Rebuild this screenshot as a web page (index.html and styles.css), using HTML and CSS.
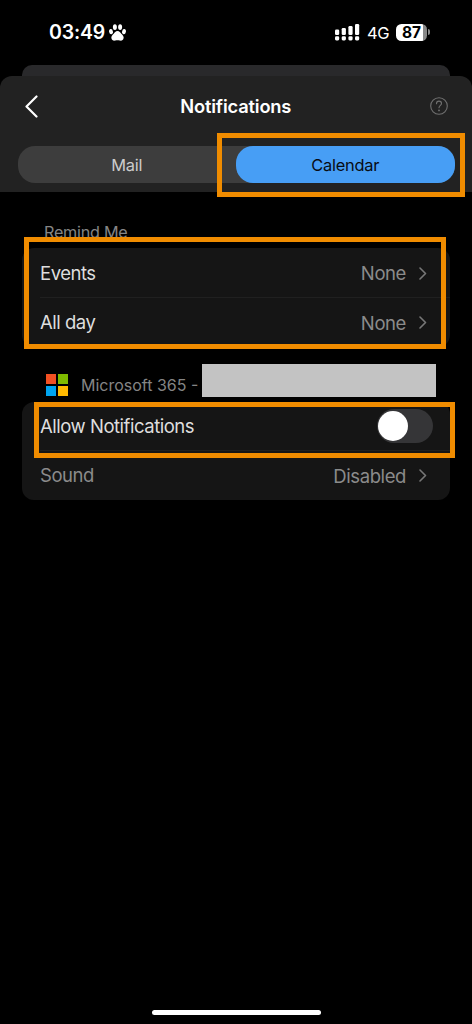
FILE: index.html
```html
<!DOCTYPE html>
<html lang="en">
<head>
<meta charset="utf-8">
<meta name="viewport" content="width=device-width, initial-scale=1">
<title>Notifications</title>
<link rel="stylesheet" href="styles.css">
</head>
<body>
<div class="phone">
  <div class="status">
    <div class="clock"><span class="time">03:49</span>
      <svg class="paw" viewBox="0 0 17 17" fill="#fff"><ellipse cx="5.9" cy="3.1" rx="2" ry="2.9"/><ellipse cx="11.1" cy="3.1" rx="2" ry="2.9"/><ellipse cx="2" cy="7.6" rx="1.9" ry="2.6" transform="rotate(-12 2 7.6)"/><ellipse cx="15" cy="7.6" rx="1.9" ry="2.6" transform="rotate(12 15 7.6)"/><path d="M8.5 6.9c2 0 2.700 1.500 3.800 2.900 1.200 1.300 2.600 2.300 2.300 4.300-.3 2.200-2.200 3-3.900 2.500-1.400-.4-3-.4-4.400 0-1.700.5-3.600-.3-3.900-2.500-.3-2 1.100-3 2.300-4.300C5.800 8.400 6.500 6.900 8.500 6.900z"/></svg>
    </div>
    <div class="indicators">
      <svg class="signal" viewBox="0 0 25 17" fill="#fff"><rect x="0" y="5.500" width="4.200" height="5.500" rx="1.300"/><rect x="6.700" y="4" width="4.200" height="7" rx="1.300"/><rect x="13.400" y="2" width="4.200" height="9" rx="1.300"/><rect x="20" y="0" width="4.200" height="11" rx="1.300"/><rect x="0" y="12.200" width="4.200" height="4.200" rx="1.300"/><rect x="6.700" y="12.200" width="4.200" height="4.200" rx="1.300"/><rect x="13.400" y="12.200" width="4.200" height="4.200" rx="1.300"/><rect x="20" y="12.200" width="4.200" height="4.200" rx="1.300"/></svg>
      <span class="network">4G</span>
      <span class="battery">87</span><span class="battery-tip"></span>
    </div>
  </div>
  <div class="back-sheet"></div>
  <div class="sheet-head">
    <div class="navbar">
      <svg class="back" viewBox="0 0 13 23" fill="none" stroke="#fff" stroke-width="2.200" stroke-linecap="round" stroke-linejoin="round"><path d="M11.500 1.500 1.500 11.500l10 10"/></svg>
      <h1 class="title">Notifications</h1>
      <svg class="help" viewBox="0 0 18 18" fill="none" stroke="#707070" stroke-width="1.100" stroke-linecap="round"><circle cx="9" cy="9" r="8.300"/><path d="M6.500 6.700c0-1.600 1-2.600 2.500-2.600s2.500.9 2.500 2.300C11.500 8.200 9 8.500 9 10.700"/><circle cx="9" cy="13.400" r=".4" fill="#707070"/></svg>
    </div>
    <div class="tabs">
      <div class="tab">Mail</div>
      <div class="tab active">Calendar</div>
    </div>
  </div>
  <div class="label">Remind Me</div>
  <div class="card">
    <div class="row"><span class="name">Events</span><span class="value">None</span><svg class="chev" viewBox="0 0 8 13"><path d="m1 1 5.500 5.500L1 12"/></svg></div>
    <div class="row"><span class="name">All day</span><span class="value">None</span><svg class="chev" viewBox="0 0 8 13"><path d="m1 1 5.500 5.500L1 12"/></svg></div>
  </div>
  <div class="account">
    <div class="logo"><i class="red"></i><i class="green"></i><i class="blue"></i><i class="yellow"></i></div>
    <span class="provider">Microsoft 365 -</span>
    <div class="redacted"></div>
  </div>
  <div class="card card-account">
    <div class="row"><span class="name">Allow Notifications</span><span class="switch"></span></div>
    <div class="row muted"><span class="name">Sound</span><span class="value">Disabled</span><svg class="chev" viewBox="0 0 8 13"><path d="m1 1 5.500 5.500L1 12"/></svg></div>
  </div>
  <div class="home"></div>
  <div class="mark mark-tab"></div>
  <div class="mark mark-remind"></div>
  <div class="mark mark-allow"></div>
</div>
</body>
</html>
```
FILE: styles.css
```css
* { box-sizing: border-box; }
body { margin: 0; background: #000; font-family: Inter, "Liberation Sans", sans-serif; }
.phone { position: relative; width: 472px; height: 1024px; background: #000; overflow: hidden; display: flex; flex-direction: column; color: #dedede; }
.phone > * { flex-shrink: 0; }
svg { display: block; flex: none; }
span { white-space: nowrap; }

.status { height: 65px; padding: 0 42px 0 49px; display: flex; justify-content: space-between; color: #fff; }
.clock { display: flex; height: 64px; align-items: center; gap: 4px; }
.time { font-size: 19.5px; font-weight: 600; width: 56px; letter-spacing: -0.15px; }
.paw { width: 17px; height: 17px; }
.indicators { display: flex; height: 64px; align-items: center; }
.signal { width: 25px; height: 17px; margin-right: 7px; }
.network { font-size: 16.5px; line-height: 18px; padding-top: 1px; letter-spacing: -0.5px; width: 22px; margin-right: 7px; }
.battery { width: 31px; height: 17px; border-radius: 5.5px; background: linear-gradient(90deg, #fff 27px, #888 27px); color: #000; font-size: 15.5px; line-height: 17px; font-weight: 700; text-align: center; }
.battery-tip { width: 2px; height: 6px; margin-left: 1px; border-radius: 0 2px 2px 0; background: #888; }

.back-sheet { height: 11px; margin: 0 22px; border-radius: 10px 10px 0 0; background: #29292b; }
.sheet-head { height: 116px; background: #222; border-radius: 12px 12px 0 0; padding: 0 17.5px; }
.navbar { height: 70px; display: flex; align-items: center; justify-content: space-between; padding: 0 6.5px 9px 7px; }
.back { width: 13px; height: 23px; }
.title { margin: 0 -2px 2px 2px; color: #fff; font-size: 18.3px; font-weight: 600; line-height: 22px; letter-spacing: -0.17px; }
.help { width: 18px; height: 18px; margin-top: -1px; }
.tabs { height: 37px; display: flex; background: #3d3d3d; border-radius: 17px; }
.tab { flex: 1; line-height: 38px; text-align: center; font-size: 16.4px; letter-spacing: -0.25px; color: #ccc; }
.active { background: #479ef5; color: #080c12; border-radius: 17px; }

.label { height: 56px; padding: 31px 0 0 44px; line-height: 18px; font-size: 16.2px; letter-spacing: -0.25px; color: #858585; }
.card { height: 99px; margin: 0 22px; border-radius: 12px; background: #151515; }
.row { position: relative; height: 49px; display: flex; align-items: center; padding: 0 23px 0 18px; font-size: 18.5px; line-height: 22px; }
.row:first-child { height: 50px; }
.row:first-child::after { content: ""; position: absolute; left: 18px; right: 0; bottom: 0; height: 1px; background: #202020; }
.card-account { height: 98px; }
.card-account .row { height: 49px; }
.row.muted { color: #8b8b8b; }
.name { letter-spacing: -0.48px; padding-bottom: 1px; }
.value { margin-left: auto; margin-right: 13px; color: #8b8b8b; letter-spacing: -0.4px; }
.chev { width: 8px; height: 13px; fill: none; stroke: #777; stroke-width: 1.6; stroke-linecap: round; stroke-linejoin: round; }

.account { height: 55px; display: flex; padding-left: 46px; }
.logo { display: grid; grid-template-columns: 10px 10px; grid-template-rows: 10px 10px; gap: 2px; margin-top: 27px; margin-right: 13px; }
.red { background: #f25022; }
.green { background: #7fba00; }
.blue { background: #00a4ef; }
.yellow { background: #ffb900; }
.provider { width: 121px; margin-top: 28px; line-height: 20px; font-size: 16px; color: #858585; }
.redacted { width: 234px; height: 33px; margin-top: 17px; background: #c3c3c3; }

.switch { margin: -1px -5.5px 0 auto; width: 56px; height: 34px; border-radius: 17px; background: #353537; padding: 2px 1.5px; }
.switch::before { content: ""; display: block; width: 30px; height: 30px; border-radius: 50%; background: #fff; }

.home { width: 169px; height: 5px; margin: auto auto 9px 151.5px; border-radius: 3px; background: #fff; }

.mark { position: absolute; border: 5px solid #f08c00; }
.mark-tab { left: 217px; top: 133px; width: 248px; height: 64px; }
.mark-remind { left: 23.5px; top: 237px; width: 422px; height: 112px; }
.mark-allow { left: 34px; top: 402px; width: 421px; height: 56px; }
```
